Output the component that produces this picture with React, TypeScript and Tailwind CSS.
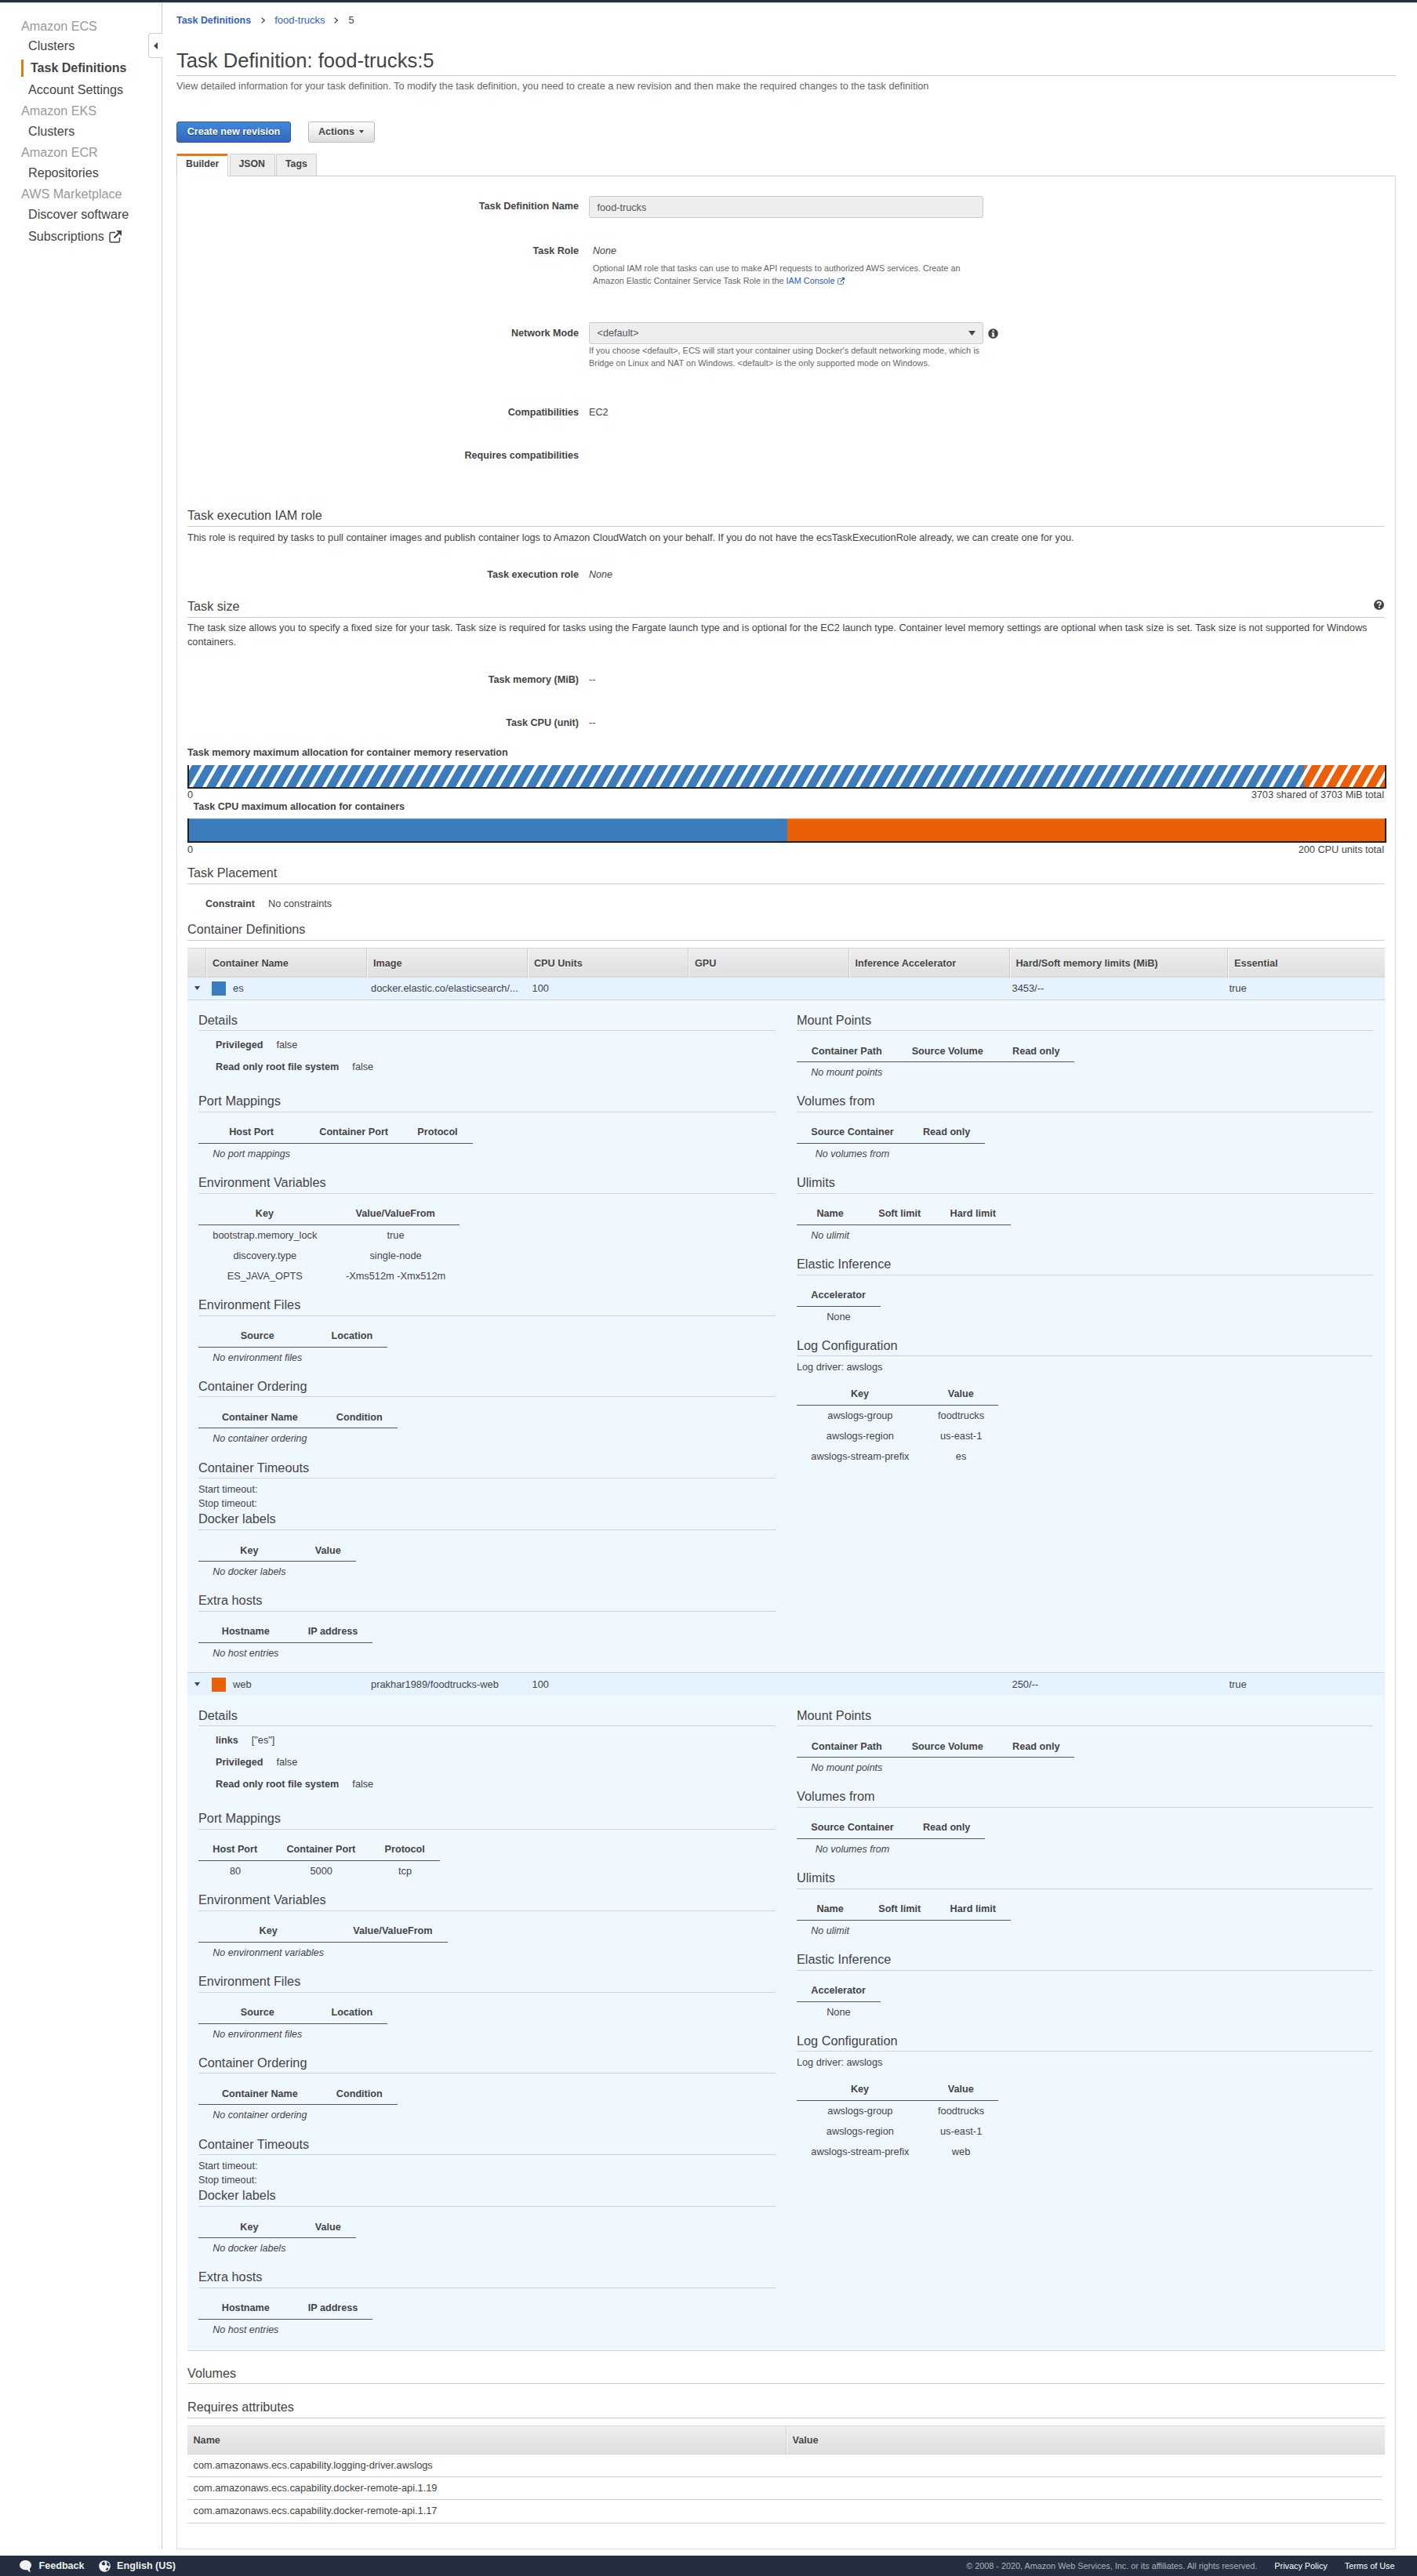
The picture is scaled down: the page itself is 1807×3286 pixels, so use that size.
import React from "react";

type Table = { head: string[]; rows?: string[][]; empty?: string };

function ExternalIcon({ size, className = "" }: { size: number; className?: string }) {
  return (
    <svg width={size} height={size} viewBox="0 0 16 16" className={className} fill="none" stroke="currentColor">
      <path d="M8 2.5H3A2 2 0 0 0 1 4.5v8.500a2 2 0 0 0 2 2h8.500a2 2 0 0 0 2-2V9" strokeWidth="1.500" />
      <path d="M6.500 9.500L13 3" strokeWidth="2.200" />
      <path d="M9 0h7v7z" fill="currentColor" stroke="none" />
    </svg>
  );
}

function Heading({ children, className = "" }: { children: React.ReactNode; className?: string }) {
  return (
    <h2 className={`flex h-[24.600px] items-start justify-between border-b border-[#ccc] text-[16.200px] leading-[20px] text-[#444] ${className}`}>
      {children}
    </h2>
  );
}

function Field({ label, children, className = "" }: { label: string; children?: React.ReactNode; className?: string }) {
  return (
    <div className={`flex gap-[13px] ${className}`}>
      <div className="w-[499px] shrink-0 text-right text-[12.600px] font-bold">{label}</div>
      <div>{children}</div>
    </div>
  );
}

function Section({ title, children }: { title: string; children: React.ReactNode }) {
  return (
    <section>
      <h3 className="h-[28px] border-b border-[#cdd3d8] pt-[3.400px] text-[16.300px] leading-[20px]">{title}</h3>
      {children}
    </section>
  );
}

function MiniTable({ head, rows, empty }: Table) {
  return (
    <table className="mt-[10px] mb-[9.800px] border-separate border-spacing-0 text-center">
      <thead>
        <tr>
          {head.map((h) => (
            <th key={h} className="h-[30px] border-b border-[#555] pt-[6.500px] pr-[19px] pl-[18.300px] align-top text-[12.650px] leading-[18px] font-bold whitespace-nowrap">
              {h}
            </th>
          ))}
        </tr>
      </thead>
      <tbody>
        {empty && (
          <tr>
            <td className="h-[26px] pt-[4px] pr-[19px] pl-[18.300px] align-top text-[12.500px] leading-[18px] whitespace-nowrap italic">{empty}</td>
          </tr>
        )}
        {rows?.map((r) => (
          <tr key={r[0]}>
            {r.map((c, i) => (
              <td key={i} className="h-[26px] px-[18.300px] pt-[4px] align-top text-[12.800px] leading-[18px] whitespace-nowrap">
                {c}
              </td>
            ))}
          </tr>
        ))}
      </tbody>
    </table>
  );
}

function ContainerRow({ color, cells, className }: { color: string; cells: string[]; className: string }) {
  return (
    <div className={`grid grid-cols-[31px_203px_205.500px_612px_277px_1fr] bg-[#e5f2ff] text-[12.850px] leading-[18px] ${className}`}>
      <div className="pt-[6px] pl-[9px]">
        <svg width="7" height="5" viewBox="0 0 7 5" fill="#444" className="block">
          <path d="M0 0h7L3.500 5z" />
        </svg>
      </div>
      <div className="flex gap-[9px]">
        <div className={`mt-[.5px] h-[18px] w-[18px] ${color}`} />
        {cells[0]}
      </div>
      {cells.slice(1).map((c, i) => (
        <div key={i}>{c}</div>
      ))}
    </div>
  );
}

function Details({
  details,
  ports,
  env,
  name,
  className,
}: {
  details: string[][];
  ports: Table;
  env: Table;
  name: string;
  className: string;
}) {
  return (
    <div className={`grid grid-cols-[736px_735px] gap-[27px] bg-[#f0f8ff] px-[14px] pt-[11.700px] ${className}`}>
      <div>
        <Section title="Details">
          <div className="pt-[5px] pb-[14.800px] pl-[22px]">
            {details.map(([k, v]) => (
              <div key={k} className="flex h-[28px] gap-[17px] pt-[4px] leading-[18px]">
                <b className="text-[12.650px]">{k}</b>
                <span>{v}</span>
              </div>
            ))}
          </div>
        </Section>
        <Section title="Port Mappings">
          <MiniTable {...ports} />
        </Section>
        <Section title="Environment Variables">
          <MiniTable {...env} />
        </Section>
        <Section title="Environment Files">
          <MiniTable head={["Source", "Location"]} empty="No environment files" />
        </Section>
        <Section title="Container Ordering">
          <MiniTable head={["Container Name", "Condition"]} empty="No container ordering" />
        </Section>
        <Section title="Container Timeouts">
          <div className="h-[37.900px] pt-[4.400px] leading-[18px]">
            <div>Start timeout:</div>
            <div>Stop timeout:</div>
          </div>
        </Section>
        <Section title="Docker labels">
          <MiniTable head={["Key", "Value"]} empty="No docker labels" />
        </Section>
        <Section title="Extra hosts">
          <MiniTable head={["Hostname", "IP address"]} empty="No host entries" />
        </Section>
      </div>
      <div>
        <Section title="Mount Points">
          <MiniTable head={["Container Path", "Source Volume", "Read only"]} empty="No mount points" />
        </Section>
        <Section title="Volumes from">
          <MiniTable head={["Source Container", "Read only"]} empty="No volumes from" />
        </Section>
        <Section title="Ulimits">
          <MiniTable head={["Name", "Soft limit", "Hard limit"]} empty="No ulimit" />
        </Section>
        <Section title="Elastic Inference">
          <MiniTable head={["Accelerator"]} rows={[["None"]]} />
        </Section>
        <Section title="Log Configuration">
          <div className="h-[22.600px] pt-[4.600px] leading-[18px]">Log driver: awslogs</div>
          <MiniTable
            head={["Key", "Value"]}
            rows={[
              ["awslogs-group", "foodtrucks"],
              ["awslogs-region", "us-east-1"],
              ["awslogs-stream-prefix", name],
            ]}
          />
        </Section>
      </div>
    </div>
  );
}

function StripedBar() {
  return (
    <svg width="1525" height="28" className="block">
      <defs>
        <pattern id="stripes" width="17" height="28" patternUnits="userSpaceOnUse">
          <path d="M0 28L16 0h5L5 28zM-17 28L-1 0h5L-12 28z" fill="#fff" />
        </pattern>
      </defs>
      <rect width="1422" height="28" fill="#3b7dbc" />
      <rect x="1422" width="103" height="28" fill="#eb5f07" />
      <rect width="1525" height="28" fill="url(#stripes)" />
    </svg>
  );
}

const headCell = "border-l border-[#ccc] pl-[8px] shadow-[inset_1px_0_0_#fafafa]";

export default function App() {
  return (
    <div className="flex h-[3286px] w-[1807px] flex-col bg-white font-['Liberation_Sans',sans-serif] text-[12.700px] text-[#444]">
      <div className="h-[4px] shrink-0 border-b border-[#ccd3d9] bg-[#232f3e]" />
      <div className="flex h-[3248px]">
        <nav className="relative w-[207px] shrink-0 border-r border-[#ccc] pt-[19px] pl-[27px] text-[16.150px] leading-[20px]">
          <div className="h-[25px] text-[#999]">Amazon ECS</div>
          <div className="h-[29px] pl-[9px]">Clusters</div>
          <div className="h-[28px]">
            <div className="-mt-[1px] h-[22px] border-l-[3px] border-[#e47911] pt-px pl-[9px] text-[16px] font-bold">Task Definitions</div>
          </div>
          <div className="h-[27px] pl-[9px]">Account Settings</div>
          <div className="h-[26px] text-[#999]">Amazon EKS</div>
          <div className="h-[27px] pl-[9px]">Clusters</div>
          <div className="h-[26px] text-[#999]">Amazon ECR</div>
          <div className="h-[27px] pl-[9px]">Repositories</div>
          <div className="h-[26px] text-[#999]">AWS Marketplace</div>
          <div className="h-[27.600px] pl-[9px]">Discover software</div>
          <div className="flex gap-[6px] pl-[9px]">
            Subscriptions
            <ExternalIcon size={16} className="mt-[3px]" />
          </div>
          <div className="absolute top-[38px] -right-px flex h-[32px] w-[18px] items-center justify-center rounded-l-[4px] border border-r-0 border-[#ccc] bg-white">
            <svg width="5" height="9" viewBox="0 0 5 9" fill="#444">
              <path d="M5 0v9L0 4.500z" />
            </svg>
          </div>
        </nav>

        <main className="ml-[18px] w-[1555px] pt-[12.600px]">
          <div className="flex h-[18px] items-start leading-[18px]">
            <span className="text-[12.450px] font-bold text-[#3463b8]">Task Definitions</span>
            <svg width="5" height="8" viewBox="0 0 5 8" className="mt-[5.500px] ml-[13px]" fill="none" stroke="#444" strokeWidth="1.300">
              <path d="M.6.600L4.200 4 .6 7.400" />
            </svg>
            <span className="ml-[12px] text-[13px] text-[#3463b8]">food-trucks</span>
            <svg width="5" height="8" viewBox="0 0 5 8" className="mt-[5.500px] ml-[12px]" fill="none" stroke="#444" strokeWidth="1.300">
              <path d="M.6.600L4.200 4 .6 7.400" />
            </svg>
            <span className="ml-[13px]">5</span>
          </div>
          <h1 className="mt-[27px] h-[35.400px] border-b border-[#ccc] text-[25.600px] leading-[30px]">Task Definition: food-trucks:5</h1>
          <p className="mt-[3.600px] text-[12.740px] leading-[18px] text-[#666]">
            View detailed information for your task definition. To modify the task definition, you need to create a new revision and then make the required changes to the task definition
          </p>
          <div className="mt-[36.400px] flex gap-[22px] text-[12.550px] leading-[25px] font-bold">
            <button className="h-[27px] w-[146px] rounded-[3px] border border-[#2a5caa] bg-linear-to-b from-[#4088dd] to-[#3467bb] text-white [text-shadow:0_1px_1px_#00000080]">
              Create new revision
            </button>
            <button className="flex h-[27px] w-[85px] items-center gap-[6px] rounded-[3px] border border-[#bbb] bg-linear-to-b from-white to-[#ddd] pl-[12px] [text-shadow:0_1px_0_#fff]">
              Actions
              <svg width="6" height="4" viewBox="0 0 6 4" fill="#444">
                <path d="M0 0h6L3 4z" />
              </svg>
            </button>
          </div>
          <div className="mt-[14px] flex h-[28px] text-[12.300px] leading-[18px] font-bold">
            <div className="relative z-10 h-[29px] w-[66px] rounded-tr-[2px] border-x border-t-[3px] border-x-[#ccc] border-t-[#e47911] bg-white pt-[1.500px] pl-[11px]">Builder</div>
            <div className="ml-[2px] h-[28px] w-[58px] rounded-t-[2px] border border-b-0 border-[#ccc] bg-[#eee] pt-[3.500px] pl-[10.500px]">JSON</div>
            <div className="ml-[1px] h-[28px] w-[52px] rounded-t-[2px] border border-b-0 border-[#ccc] bg-[#eee] pt-[3.500px] pl-[11px]">Tags</div>
          </div>

          <div className="h-[3028px] border border-[#ddd] border-t-[#ccc] px-[13px] leading-[18px]">
            <Field label="Task Definition Name" className="mt-[25px] h-[28px] pt-[3.600px]">
              <div className="-mt-[3.600px] h-[28px] w-[503px] rounded-[3px] border border-[#ccc] bg-[#eee] pt-[5px] pl-[9.500px] text-[#555]">food-trucks</div>
            </Field>
            <Field label="Task Role" className="mt-[32.600px]">
              <div className="pl-[5px] text-[12.500px] italic">None</div>
              <div className="mt-[5px] w-[490px] pl-[5px] text-[10.830px] leading-[16px] whitespace-nowrap text-[#666]">
                Optional IAM role that tasks can use to make API requests to authorized AWS services. Create an
                <br />
                Amazon Elastic Container Service Task Role in the <span className="text-[#2a5db0]">IAM Console</span>
                <ExternalIcon size={9} className="ml-[3px] inline-block align-[-1px] text-[#2a5db0]" />
              </div>
            </Field>
            <Field label="Network Mode" className="mt-[45.500px] pt-[4.600px]">
              <div className="-mt-[4.600px] flex items-center gap-[6px]">
                <div className="flex h-[28px] w-[503px] items-center justify-between rounded-[3px] border border-[#ccc] bg-[#eee] pr-[9px] pl-[9.500px] text-[#555]">
                  &lt;default&gt;
                  <svg width="9" height="6" viewBox="0 0 9 6" fill="#444">
                    <path d="M0 0h9L4.500 6z" />
                  </svg>
                </div>
                <svg width="13" height="13" viewBox="0 0 13 13">
                  <circle cx="6.500" cy="6.500" r="6.300" fill="#444" />
                  <path d="M5.500 2.200h2.200v1.900H5.500zM4.600 5.200h3.100v4h.9v1.300h-4V9.200h.9V6.500h-.9z" fill="#fff" />
                </svg>
              </div>
              <div className="text-[10.930px] leading-[16px] whitespace-nowrap text-[#666]">
                If you choose &lt;default&gt;, ECS will start your container using Docker's default networking mode, which is
                <br />
                Bridge on Linux and NAT on Windows. &lt;default&gt; is the only supported mode on Windows.
              </div>
            </Field>
            <Field label="Compatibilities" className="mt-[45.600px]">EC2</Field>
            <Field label="Requires compatibilities" className="mt-[37.300px]" />

            <Heading className="mt-[57.500px]">Task execution IAM role</Heading>
            <p className="mt-[5px]">
              This role is required by tasks to pull container images and publish container logs to Amazon CloudWatch on your behalf. If you do not have the ecsTaskExecutionRole already, we can create one for you.
            </p>
            <Field label="Task execution role" className="mt-[28.600px]">
              <i className="text-[12.500px]">None</i>
            </Field>

            <Heading className="mt-[21.800px]">
              Task size
              <svg width="13" height="13" viewBox="0 0 13 13" className="mt-[1.500px] mr-[1.500px]">
                <circle cx="6.500" cy="6.500" r="6.500" fill="#444" />
                <path d="M4.300 5c0-3 4.500-2.800 4.500-.3 0 1.500-2 1.700-2 3.100" fill="none" stroke="#fff" strokeWidth="1.700" />
                <path d="M5.800 8.900h2v1.800h-2z" fill="#fff" />
              </svg>
            </Heading>
            <p className="mt-[4.100px] text-[12.690px]">
              <span className="whitespace-nowrap">The task size allows you to specify a fixed size for your task. Task size is required for tasks using the Fargate launch type and is optional for the EC2 launch type. Container level memory settings are optional when task size is set. Task size is not supported for Windows</span>
              <br />
              containers.
            </p>
            <Field label="Task memory (MiB)" className="mt-[30.300px]">--</Field>
            <Field label="Task CPU (unit)" className="mt-[37px]">--</Field>

            <div className="mt-[20px] text-[12.590px] font-bold">Task memory maximum allocation for container memory reservation</div>
            <div className="mt-[6.100px] -mr-[2px] h-[30px] border-x-2 border-b-2 border-[#222]">
              <StripedBar />
            </div>
            <div className="-mt-[.4px] flex justify-between pr-px">
              <span>0</span>
              <span>3703 shared of 3703 MiB total</span>
            </div>
            <div className="-mt-[2.700px] pl-[7.500px] text-[12.590px] font-bold">Task CPU maximum allocation for containers</div>
            <div className="mt-[5.100px] -mr-[2px] flex h-[31px] border-x-2 border-b-2 border-[#222]">
              <div className="flex-1 border-t border-[#6aa0d0] bg-[#3b7dbc]" />
              <div className="flex-1 border-t border-[#f08a48] bg-[#eb5f07]" />
            </div>
            <div className="flex justify-between pr-px">
              <span>0</span>
              <span>200 CPU units total</span>
            </div>

            <Heading className="mt-[10.700px]">Task Placement</Heading>
            <div className="mt-[16.600px] flex gap-[17px] pl-[23px]">
              <b className="text-[12.600px]">Constraint</b>
              <span>No constraints</span>
            </div>
            <Heading className="mt-[12.500px]">Container Definitions</Heading>

            <div className="mt-[9px] grid h-[38px] grid-cols-[23px_205px_205px_205px_204.500px_205px_278.500px_1fr] border-y border-[#d5d5d5] bg-linear-to-b from-[#eee] to-[#dfdfdf] text-[12.630px] leading-[38px] font-bold [text-shadow:0_1px_0_#fff]">
              <div />
              <div className={headCell}>Container Name</div>
              <div className={headCell}>Image</div>
              <div className={headCell}>CPU Units</div>
              <div className={headCell}>GPU</div>
              <div className={headCell}>Inference Accelerator</div>
              <div className={headCell}>Hard/Soft memory limits (MiB)</div>
              <div className={headCell}>Essential</div>
            </div>
            <ContainerRow
              className="h-[29px] border-b border-[#ccd3da] pt-[5px]"
              color="bg-[#3b7dbc]"
              cells={["es", "docker.elastic.co/elasticsearch/...", "100", "3453/--", "true"]}
            />
            <Details
              className="h-[857px]"
              name="es"
              details={[
                ["Privileged", "false"],
                ["Read only root file system", "false"],
              ]}
              ports={{ head: ["Host Port", "Container Port", "Protocol"], empty: "No port mappings" }}
              env={{
                head: ["Key", "Value/ValueFrom"],
                rows: [
                  ["bootstrap.memory_lock", "true"],
                  ["discovery.type", "single-node"],
                  ["ES_JAVA_OPTS", "-Xms512m -Xmx512m"],
                ],
              }}
            />
            <ContainerRow
              className="h-[30px] border-t border-[#ccd3da] pt-[6px]"
              color="bg-[#eb5f07]"
              cells={["web", "prakhar1989/foodtrucks-web", "100", "250/--", "true"]}
            />
            <Details
              className="h-[836px] border-b border-[#ccd3da]"
              name="web"
              details={[
                ["links", '["es"]'],
                ["Privileged", "false"],
                ["Read only root file system", "false"],
              ]}
              ports={{ head: ["Host Port", "Container Port", "Protocol"], rows: [["80", "5000", "tcp"]] }}
              env={{ head: ["Key", "Value/ValueFrom"], empty: "No environment variables" }}
            />

            <Heading className="mt-[18.400px]">Volumes</Heading>
            <Heading className="mt-[18.900px]">Requires attributes</Heading>
            <div className="mt-[9.500px] grid h-[37px] grid-cols-[763px_1fr] border border-x-0 border-[#d5d5d5] bg-linear-to-b from-[#eee] to-[#dfdfdf] text-[12.630px] leading-[37px] font-bold [text-shadow:0_1px_0_#fff]">
              <div className="pl-[7.500px]">Name</div>
              <div className="border-l border-[#ccc] pl-[7.500px] shadow-[inset_1px_0_0_#fafafa]">Value</div>
            </div>
            {["logging-driver.awslogs", "docker-remote-api.1.19", "docker-remote-api.1.17"].map((a) => (
              <div key={a} className="mr-[4px] h-[29px] border-b border-[#ccc] pt-[5px] pl-[7.500px] text-[12.790px] last:mr-0 last:h-[30px]">
                com.amazonaws.ecs.capability.{a}
              </div>
            ))}
          </div>
        </main>
      </div>

      <footer className="mt-[8px] flex h-[26px] shrink-0 items-start bg-[#232f3e] pt-[4.300px] pl-[25px] text-[12.600px] leading-[18px] font-bold text-[#eee]">
        <svg width="15" height="15" viewBox="0 0 15 15" className="mt-[1.500px]" fill="#f3f3f3">
          <path d="M7.500 0C3.300 0 0 2.700 0 6s3.300 6.200 7.500 6.200c.8 0 1.600-.1 2.300-.3 1 1.400 2.300 2.600 4.200 3.100-.9-1.400-1.100-2.800-1-4.400C14.200 9.500 15 7.900 15 6c0-3.300-3.300-6-7.500-6z" />
        </svg>
        <span className="ml-[9.500px]">Feedback</span>
        <svg width="15" height="15" viewBox="0 0 15 15" className="mt-[1.500px] ml-[18px]">
          <circle cx="7.500" cy="7.500" r="7.300" fill="#f3f3f3" />
          <path d="M3.500 3.500L7.500 1 7 3l1.500 1.500L7 6.500 4.500 6zM9.500 1.500L13 4l.8 3-1.800.5L10 5.500l.5-1.500zM8.500 12l2-2.500 2 .5-1.500 3z" fill="#232f3e" />
        </svg>
        <span className="ml-[8.500px]">English (US)</span>
        <div className="mr-[28.500px] ml-auto flex gap-[22px] text-[10.830px] font-normal text-white">
          <span className="text-[#a9b5b8]">© 2008 - 2020, Amazon Web Services, Inc. or its affiliates. All rights reserved.</span>
          <span>Privacy Policy</span>
          <span>Terms of Use</span>
        </div>
      </footer>
    </div>
  );
}
